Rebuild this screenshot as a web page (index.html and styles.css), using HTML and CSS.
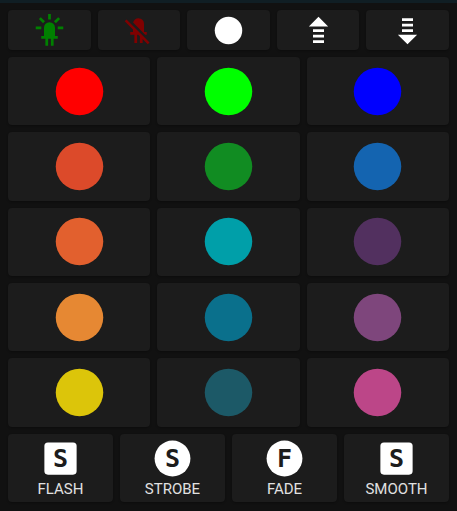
FILE: index.html
```html
<!DOCTYPE html>
<html lang="en">
<head>
<meta charset="utf-8">
<meta name="viewport" content="width=device-width, initial-scale=1">
<title>LED remote</title>
<link rel="stylesheet" href="styles.css">
</head>
<body>
<main class="remote">
  <div class="row row-5">
    <button class="key" aria-label="On"><svg class="icon on" viewBox="0 0 24 24"><path d="M11,0V4H13V0H11M18.3,2.29L15.24,5.29L16.64,6.71L19.7,3.71L18.3,2.29M5.71,2.29L4.29,3.71L7.29,6.71L8.71,5.29L5.71,2.29M12,6A4,4 0 0,0 8,10V16H6V18H9V23H11V18H13V23H15V18H18V16H16V10A4,4 0 0,0 12,6M2,9V11H6V9H2M18,9V11H22V9H18Z"/></svg></button>
    <button class="key" aria-label="Off"><svg class="icon off" viewBox="0 0 24 24"><path d="M12,3C10.05,3 8.43,4.4 8.08,6.25L16.82,15H18V13H16V7A4,4 0 0,0 12,3M3.28,4L2,5.27L8,11.27V13H6V15H9V21H11V15H11.73L13,16.27V21H15V18.27L18.73,22L20,20.72L15,15.72L8,8.72L3.28,4Z"/></svg></button>
    <button class="key" aria-label="White"><svg class="icon" viewBox="0 0 24 24"><circle cx="12" cy="12" r="10"/></svg></button>
    <button class="key" aria-label="Brighter"><svg class="icon" viewBox="0 0 24 24"><path d="M8,21V19H16V21H8M8,17V15H16V17H8M8,13V11H16V13H8M5,9L12,2L19,9H5Z"/></svg></button>
    <button class="key" aria-label="Dimmer"><svg class="icon" viewBox="0 0 24 24"><path d="M8,3V5H16V3H8M8,7V9H16V7H8M8,11V13H16V11H8M5,15L12,22L19,15H5Z"/></svg></button>
  </div>
  <div class="row row-3">
    <button class="key" aria-label="Red"><svg class="swatch red" viewBox="0 0 24 24"><circle cx="12" cy="12" r="10"/></svg></button>
    <button class="key" aria-label="Green"><svg class="swatch green" viewBox="0 0 24 24"><circle cx="12" cy="12" r="10"/></svg></button>
    <button class="key" aria-label="Blue"><svg class="swatch blue" viewBox="0 0 24 24"><circle cx="12" cy="12" r="10"/></svg></button>
  </div>
  <div class="row row-3">
    <button class="key" aria-label="Vermilion"><svg class="swatch vermilion" viewBox="0 0 24 24"><circle cx="12" cy="12" r="10"/></svg></button>
    <button class="key" aria-label="Forest"><svg class="swatch forest" viewBox="0 0 24 24"><circle cx="12" cy="12" r="10"/></svg></button>
    <button class="key" aria-label="Azure"><svg class="swatch azure" viewBox="0 0 24 24"><circle cx="12" cy="12" r="10"/></svg></button>
  </div>
  <div class="row row-3">
    <button class="key" aria-label="Orange"><svg class="swatch orange" viewBox="0 0 24 24"><circle cx="12" cy="12" r="10"/></svg></button>
    <button class="key" aria-label="Cyan"><svg class="swatch cyan" viewBox="0 0 24 24"><circle cx="12" cy="12" r="10"/></svg></button>
    <button class="key" aria-label="Plum"><svg class="swatch plum" viewBox="0 0 24 24"><circle cx="12" cy="12" r="10"/></svg></button>
  </div>
  <div class="row row-3">
    <button class="key" aria-label="Amber"><svg class="swatch amber" viewBox="0 0 24 24"><circle cx="12" cy="12" r="10"/></svg></button>
    <button class="key" aria-label="Teal"><svg class="swatch teal" viewBox="0 0 24 24"><circle cx="12" cy="12" r="10"/></svg></button>
    <button class="key" aria-label="Purple"><svg class="swatch purple" viewBox="0 0 24 24"><circle cx="12" cy="12" r="10"/></svg></button>
  </div>
  <div class="row row-3">
    <button class="key" aria-label="Yellow"><svg class="swatch yellow" viewBox="0 0 24 24"><circle cx="12" cy="12" r="10"/></svg></button>
    <button class="key" aria-label="Slate"><svg class="swatch slate" viewBox="0 0 24 24"><circle cx="12" cy="12" r="10"/></svg></button>
    <button class="key" aria-label="Pink"><svg class="swatch pink" viewBox="0 0 24 24"><circle cx="12" cy="12" r="10"/></svg></button>
  </div>
  <div class="row row-4">
    <button class="key"><svg class="mode" viewBox="0 0 24 24" aria-hidden="true"><rect x="3" y="3" width="18" height="18" rx="2"/><text class="letter" x="12" y="17">S</text></svg><span>FLASH</span></button>
    <button class="key"><svg class="mode" viewBox="0 0 24 24" aria-hidden="true"><circle cx="12" cy="12" r="10"/><text class="letter" x="12" y="17">S</text></svg><span>STROBE</span></button>
    <button class="key"><svg class="mode" viewBox="0 0 24 24" aria-hidden="true"><circle cx="12" cy="12" r="10"/><text class="letter" x="12" y="17">F</text></svg><span>FADE</span></button>
    <button class="key"><svg class="mode" viewBox="0 0 24 24" aria-hidden="true"><rect x="3" y="3" width="18" height="18" rx="2"/><text class="letter" x="12" y="17">S</text></svg><span>SMOOTH</span></button>
  </div>
</main>
</body>
</html>
```
FILE: styles.css
```css
* {
  box-sizing: border-box;
}

body {
  margin: 0;
  background: #111111;
  font-family: Roboto, "Liberation Sans", sans-serif;
}

.remote {
  display: grid;
  grid-template-rows: 40px repeat(6, minmax(66px, 1fr));
  gap: 7px;
  min-height: 100vh;
  padding: 7px 8px 9px;
  border-top: 3px solid #101e24;
}

.row {
  display: grid;
  gap: 7px;
}

.row-3 { grid-template-columns: repeat(3, 1fr); }
.row-4 { grid-template-columns: repeat(4, 1fr); }
.row-5 { grid-template-columns: repeat(5, 1fr); }

.key {
  display: flex;
  flex-direction: column;
  align-items: center;
  justify-content: center;
  min-width: 0;
  padding: 0;
  border: 0;
  border-radius: 4px;
  background: #1c1c1c;
  box-shadow: 0 1px 2px rgba(0, 0, 0, 0.3);
  color: #e1e1e1;
  font: 400 15px/18px Roboto, "Liberation Sans", sans-serif;
  cursor: pointer;
}

svg {
  display: block;
  flex: none;
  fill: #ffffff;
}

.icon { width: 33px; height: 33px; }
.swatch { width: 57px; height: 57px; }
.mode { width: 43px; height: 43px; }

.letter {
  fill: #1c1c1c;
  font: 700 14px "Liberation Sans Narrow", "DejaVu Sans Mono", monospace;
  text-anchor: middle;
}

.on { fill: #008000; }
.off { fill: #800000; }

.red { fill: #ff0000; }
.green { fill: #00ff00; }
.blue { fill: #0000ff; }
.vermilion { fill: #dc4a2a; }
.forest { fill: #118c22; }
.azure { fill: #1464b0; }
.orange { fill: #e2602e; }
.cyan { fill: #009fa9; }
.plum { fill: #52305f; }
.amber { fill: #e68833; }
.teal { fill: #0a708c; }
.purple { fill: #7e467c; }
.yellow { fill: #dcc50a; }
.slate { fill: #1c5967; }
.pink { fill: #bc4688; }
```
